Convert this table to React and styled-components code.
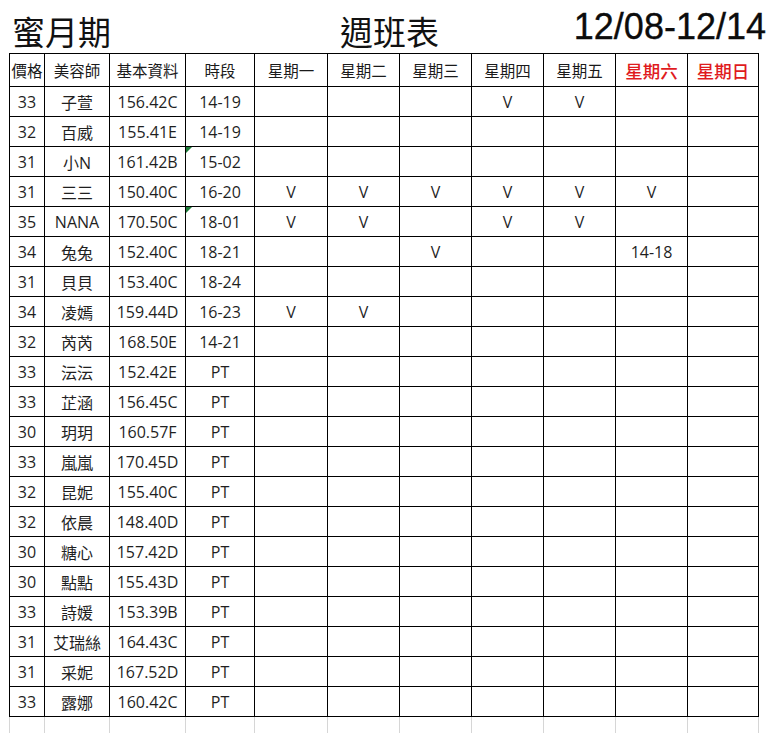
import React from "react";
import styled, { createGlobalStyle } from "styled-components";

const GlobalStyle = createGlobalStyle`
  body {
    margin: 0;
    background: #ffffff;
    font-family: "Open Sans", "Noto Sans CJK TC", sans-serif;
    color: #1a1a1a;
  }
`;

const Page = styled.div`
  width: 772px;
  height: 733px;
  overflow: hidden;
  padding-left: 9px;
  box-sizing: border-box;
`;

const TitleBar = styled.div`
  height: 53px;
  display: flex;
  align-items: flex-end;
`;

const SerifTitle = styled.div`
  font-family: "DejaVu Serif", "Noto Sans CJK TC", serif;
  font-size: 33px;
  line-height: 1;
  padding-bottom: 3px;
  margin-left: ${(p) => p.offset}px;
  color: #111;
`;

const DateTitle = styled.div`
  margin-left: auto;
  margin-right: 6px;
  font-family: "Liberation Sans", Arial, sans-serif;
  font-size: 36px;
  line-height: 1;
  padding-bottom: 8px;
  color: #0c0c0c;
  -webkit-text-stroke: 0.35px #0c0c0c;
`;

const Sheet = styled.table`
  border-collapse: collapse;
  table-layout: fixed;
  width: 749px;
`;

const HeadCell = styled.th`
  height: 32px;
  padding: 0;
  border: 1px solid #000;
  font-weight: ${(p) => (p.weekend ? 500 : 400)};
  font-size: ${(p) => (p.weekend ? "17.5px" : "15.5px")};
  text-align: center;
  vertical-align: middle;
  color: ${(p) => (p.weekend ? "#e01b1e" : "#1a1a1a")};
`;

const Cell = styled.td`
  position: relative;
  height: 29px;
  padding: 0;
  border: 1px solid #000;
  font-size: 16px;
  text-align: center;
  vertical-align: middle;
  white-space: nowrap;
  color: #1f1f1f;
`;

const GridCell = styled.td`
  height: 17px;
  padding: 0;
  border-left: 1px solid #d6d6d6;
  border-right: 1px solid #d6d6d6;
  border-top: 1px solid #000;
`;

const Marker = styled.span`
  position: absolute;
  top: 0;
  left: 0;
  width: 0;
  height: 0;
  border-top: 6px solid #1b7a36;
  border-right: 6px solid transparent;
`;

const widths = [35, 65, 76, 69, 73, 72, 72, 72, 72, 72, 71];

const headers = [
  "價格",
  "美容師",
  "基本資料",
  "時段",
  "星期一",
  "星期二",
  "星期三",
  "星期四",
  "星期五",
  "星期六",
  "星期日",
];

const rows = [
  ["33", "子萱", "156.42C", "14-19", ["", "", "", "V", "V", "", ""]],
  ["32", "百威", "155.41E", "14-19", []],
  ["31", "小N", "161.42B", "15-02", [], true],
  ["31", "三三", "150.40C", "16-20", ["V", "V", "V", "V", "V", "V", ""]],
  ["35", "NANA", "170.50C", "18-01", ["V", "V", "", "V", "V", "", ""], true],
  ["34", "兔兔", "152.40C", "18-21", ["", "", "V", "", "", "14-18", ""]],
  ["31", "貝貝", "153.40C", "18-24", []],
  ["34", "凌嫣", "159.44D", "16-23", ["V", "V"]],
  ["32", "芮芮", "168.50E", "14-21", []],
  ["33", "沄沄", "152.42E", "PT", []],
  ["33", "芷涵", "156.45C", "PT", []],
  ["30", "玥玥", "160.57F", "PT", []],
  ["33", "嵐嵐", "170.45D", "PT", []],
  ["32", "昆妮", "155.40C", "PT", []],
  ["32", "依晨", "148.40D", "PT", []],
  ["30", "糖心", "157.42D", "PT", []],
  ["30", "點點", "155.43D", "PT", []],
  ["33", "詩媛", "153.39B", "PT", []],
  ["31", "艾瑞絲", "164.43C", "PT", []],
  ["31", "采妮", "167.52D", "PT", []],
  ["33", "露娜", "160.42C", "PT", []],
];

export default function App() {
  return (
    <>
      <GlobalStyle />
      <Page>
        <TitleBar>
          <SerifTitle offset={3}>蜜月期</SerifTitle>
          <SerifTitle offset={229}>週班表</SerifTitle>
          <DateTitle>12/08-12/14</DateTitle>
        </TitleBar>
        <Sheet>
          <colgroup>
            {widths.map((w, i) => (
              <col key={i} style={{ width: w }} />
            ))}
          </colgroup>
          <thead>
            <tr>
              {headers.map((h, i) => (
                <HeadCell key={h} weekend={i >= 9}>
                  {h}
                </HeadCell>
              ))}
            </tr>
          </thead>
          <tbody>
            {rows.map(([price, name, info, time, days, mark], r) => (
              <tr key={r}>
                <Cell>{price}</Cell>
                <Cell>{name}</Cell>
                <Cell>{info}</Cell>
                <Cell>
                  {mark && <Marker />}
                  {time}
                </Cell>
                {Array.from({ length: 7 }, (_, d) => (
                  <Cell key={d}>{days[d] || ""}</Cell>
                ))}
              </tr>
            ))}
            <tr>
              {widths.map((_, i) => (
                <GridCell key={i} />
              ))}
            </tr>
          </tbody>
        </Sheet>
      </Page>
    </>
  );
}
